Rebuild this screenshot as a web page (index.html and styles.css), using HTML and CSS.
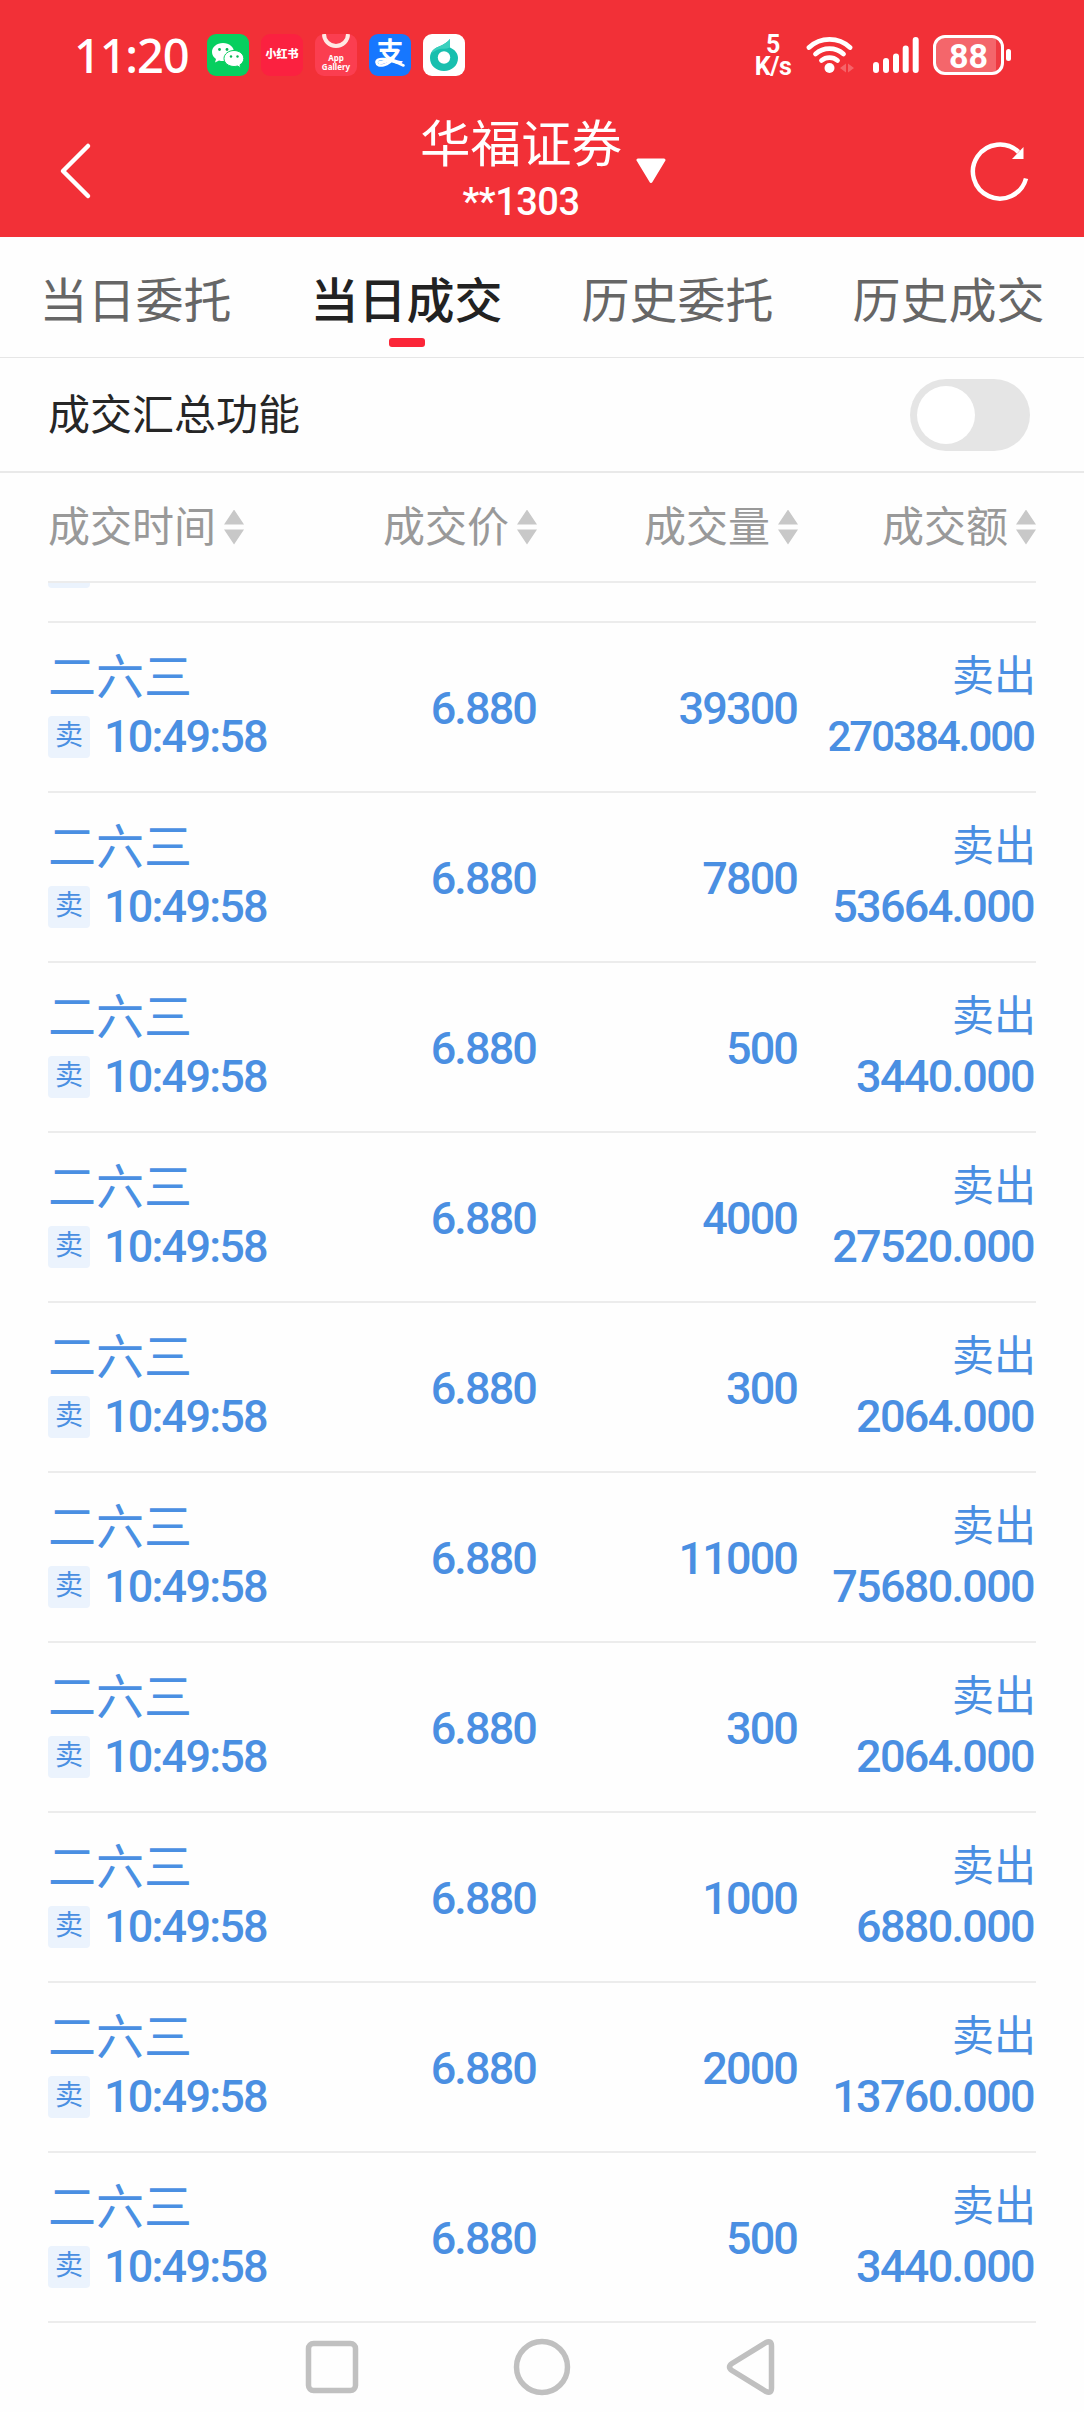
FILE: index.html
```
<!DOCTYPE html>
<html lang="zh-CN">
<head>
  <meta charset="UTF-8">
  <meta name="viewport" content="width=device-width, initial-scale=1.0">
  <title>当日成交</title>
  <link rel="stylesheet" href="styles.css">
</head>
<body>
  <header class="header">
    <div class="status-bar">
      <span class="clock">11:20</span>
      <div class="app-icons">
        <svg width="42" height="42" viewBox="0 0 42 42">
          <rect width="42" height="42" rx="9" fill="#07cf5f"/>
          <path d="M16 9c-6.300 0-11 4-11 9 0 2.800 1.500 5.300 4 7l-1 3.500 4-2c1.300.4 2.600.5 4 .5 6.300 0 11-4 11-9s-4.700-9-11-9z" fill="#fff"/>
          <path d="M27 16.500c-5.600 0-10 3.600-10 8s4.400 8 10 8c1.200 0 2.400-.2 3.500-.5l3.300 1.800-.8-3c2.400-1.500 3.800-3.700 3.800-6.300 0-4.400-4.300-8-9.800-8z" fill="#fff" stroke="#07cf5f" stroke-width="1"/>
          <g fill="#07b853"><circle cx="12.500" cy="15.500" r="1.400"/><circle cx="20" cy="15.500" r="1.400"/><circle cx="24" cy="22.500" r="1.200"/><circle cx="30.500" cy="22.500" r="1.200"/></g>
        </svg>
        <span class="app app-red">小红书</span>
        <span class="app app-gallery">
          <svg width="42" height="16" viewBox="0 0 42 16"><path d="M9 0a12 12 0 0 0 24 0" fill="none" stroke="#ffe9e4" stroke-width="4"/></svg>
          <span>App<br>Gallery</span>
        </span>
        <span class="app app-pay">支
          <svg class="pay-stroke" width="42" height="42" viewBox="0 0 42 42"><path d="M25 23C20 32 8 34 7.500 28.500C7 23 19 24 34.500 31.500" fill="none" stroke="#fff" stroke-width="2.600" stroke-linecap="round"/></svg>
        </span>
        <svg width="42" height="42" viewBox="0 0 42 42">
          <rect width="42" height="42" rx="9" fill="#fff"/>
          <path d="M27 5v8.500c5 2.200 8 6 8 10.500 0 7.500-6 13-14 13S7 31.500 7 24c0-6.500 4-9.500 9-11.500 4.500-2 8.500-4 11-7.500z" fill="#18bfae"/>
          <path d="M27 5v8.500c-4 2-8 .5-12 2-3 1-5 3-7 4 1.500-4 4.500-5.700 8-7 4.500-2 8.500-4 11-7.500z" fill="#3bd0be"/>
          <circle cx="21" cy="23.500" r="6.200" fill="#fff"/>
        </svg>
      </div>
      <div class="status-right">
        <span class="net-speed">5<br>K/s</span>
        <svg class="wifi" width="50" height="40" viewBox="0 0 50 40">
          <g fill="none" stroke="#fff" stroke-width="4.800" stroke-linecap="round">
            <path d="M3 12.500a30 30 0 0 1 41 0"/>
            <path d="M9.500 19a21 21 0 0 1 28 0"/>
            <path d="M15.500 25.500a12.500 12.500 0 0 1 16 0"/>
          </g>
          <circle cx="23.500" cy="33" r="5" fill="#fff"/>
          <path d="M40 28.500v9l-6-4.500zM42 28.500v9l6-4.500z" fill="#f56469"/>
        </svg>
        <svg class="signal" width="46" height="40" viewBox="0 0 46 40">
          <g stroke="#fff" stroke-width="6" stroke-linecap="round">
            <path d="M3 30v5M13 26v9M23 21.500v13.500M32.700 13.500v21.500M42.700 5v30"/>
          </g>
        </svg>
        <span class="battery">88</span>
        <span class="battery-tip"></span>
      </div>
    </div>
    <div class="nav-bar">
      <svg width="34" height="60" viewBox="0 0 34 60"><path d="M30 5L5 30l25 25" fill="none" stroke="#fff" stroke-width="4.500" stroke-linecap="round" stroke-linejoin="round"/></svg>
      <div class="account">
        <div class="account-text">
          <h1>华福证券</h1>
          <p>**1303</p>
        </div>
        <svg width="30" height="26" viewBox="0 0 30 26"><path d="M2 2h26L15 23.500z" fill="#fff" stroke="#fff" stroke-width="3" stroke-linejoin="round"/></svg>
      </div>
      <svg width="60" height="60" viewBox="0 0 60 60">
        <path d="M48.500 11A27 27 0 1 0 56 37.500" fill="none" stroke="#fff" stroke-width="4.500"/>
        <path d="M53.500 6v12H42z" fill="#fff"/>
      </svg>
    </div>
  </header>

  <nav class="tabs">
    <a class="tab">当日委托</a>
    <a class="tab active">当日成交</a>
    <a class="tab">历史委托</a>
    <a class="tab">历史成交</a>
  </nav>

  <div class="summary">
    <span class="summary-label">成交汇总功能</span>
    <span class="switch"></span>
  </div>

  <main class="deals">
    <div class="grid-row table-head">
      <div class="sort"><span>成交时间</span></div>
      <div class="sort"><span>成交价</span></div>
      <div class="sort"><span>成交量</span></div>
      <div class="sort"><span>成交额</span></div>
    </div>
    <div class="list" id="list"></div>
  </main>

  <footer class="system-nav">
    <svg width="60" height="60" viewBox="0 0 60 60"><rect x="6.500" y="6.500" width="47" height="47" rx="5"/></svg>
    <svg width="60" height="60" viewBox="0 0 60 60"><circle cx="30" cy="30" r="25.500"/></svg>
    <svg width="60" height="60" viewBox="0 0 60 60"><path d="M44 5.500L10 26.500Q5 30 10 33.500L44 54.500Q49.500 57 49.500 51V9Q49.500 3 44 5.500z"/></svg>
  </footer>

  <script>
    // [成交量, 成交额]
    const deals = [
      ['300', '2064.000'],
      ['39300', '270384.000'],
      ['7800', '53664.000'],
      ['500', '3440.000'],
      ['4000', '27520.000'],
      ['300', '2064.000'],
      ['11000', '75680.000'],
      ['300', '2064.000'],
      ['1000', '6880.000'],
      ['2000', '13760.000'],
      ['500', '3440.000']
    ];

    // 金额过长时缩小字号
    document.getElementById('list').innerHTML = deals.map(([volume, amount]) => `
      <div class="grid-row deal">
        <div class="stock">
          <div class="name">二六三</div>
          <div class="time"><span class="badge">卖</span>10:49:58</div>
        </div>
        <div class="num">6.880</div>
        <div class="num">${volume}</div>
        <div class="total">
          <div class="side">卖出</div>
          <div class="amount${amount.length > 9 ? ' long' : ''}">${amount}</div>
        </div>
      </div>`).join('');
  </script>
</body>
</html>
```
FILE: styles.css
```
* {
  box-sizing: border-box;
  margin: 0;
  padding: 0;
}
body {
  width: 1084px;
  height: 2412px;
  display: flex;
  flex-direction: column;
  overflow: hidden;
  background: #fefefe;
  font-family: Roboto, "Noto Sans CJK SC", sans-serif;
  color: #262626;
}
svg {
  display: block;
  flex: none;
}

/* header */
.header {
  height: 237px;
  background: #f23037;
  color: #fff;
}
.status-bar {
  height: 110px;
  padding: 0 73px 0 74px;
  display: flex;
  align-items: center;
}
.clock {
  width: 133px;
  font-family: "Noto Sans", sans-serif;
  font-size: 47px;
  font-weight: 500;
  letter-spacing: -1.200px;
}
.app-icons {
  display: flex;
  gap: 12px;
}
.app {
  position: relative;
  width: 42px;
  height: 42px;
  border-radius: 9px;
  overflow: hidden;
  text-align: center;
}
.app-red {
  background: #fb2140;
  font-size: 11px;
  font-weight: 900;
  line-height: 42px;
}
.app-gallery {
  background: #fb3e50;
  font: 700 8px/9px "Noto Sans", sans-serif;
}
.app-gallery svg {
  margin-bottom: 3px;
}
.app-pay {
  background: #1677ff;
  font-size: 27px;
  font-weight: 700;
  line-height: 38px;
}
.pay-stroke {
  position: absolute;
  left: 0;
  top: 0;
}
.status-right {
  margin-left: auto;
  display: flex;
  align-items: center;
}
.net-speed {
  width: 40px;
  margin-right: 13px;
  padding-top: 2px;
  font-size: 25px;
  font-weight: 700;
  line-height: 22px;
  letter-spacing: -0.500px;
  text-align: center;
}
.wifi {
  margin-right: 17px;
}
.signal {
  margin-right: 14px;
}
.battery {
  width: 71px;
  height: 40px;
  border: 3px solid #fff;
  border-radius: 12px;
  background: linear-gradient(to right, #f4666b 60px, #ef3a41 60px);
  font-size: 34px;
  font-weight: 700;
  line-height: 37px;
  text-align: center;
}
.battery-tip {
  width: 5px;
  height: 12px;
  margin-left: 2px;
  border-radius: 3px;
  background: #fff;
}
.nav-bar {
  height: 122px;
  padding: 0 54px 0 58px;
  display: flex;
  align-items: center;
  justify-content: space-between;
}
.account {
  display: flex;
  align-items: center;
  gap: 14px;
  margin-left: 24px;
}
.account-text {
  text-align: center;
}
.account h1 {
  padding-bottom: 6px;
  font-size: 50.500px;
  font-weight: 400;
  line-height: 56px;
}
.account p {
  font-size: 38px;
  font-weight: 500;
  line-height: 46px;
  letter-spacing: -0.500px;
}

/* tabs */
.tabs {
  height: 121px;
  display: grid;
  grid-template-columns: repeat(4, 1fr);
  border-bottom: 1px solid #e6e6e6;
}
.tab {
  display: flex;
  flex-direction: column;
  align-items: center;
  padding-top: 29px;
  font-size: 48px;
  line-height: 72px;
  color: #666;
}
.tab.active {
  color: #222;
  font-weight: 500;
}
.tab.active::after {
  content: "";
  width: 36px;
  height: 9px;
  border-radius: 3px;
  background: #fb2638;
}

/* summary switch */
.summary {
  height: 115px;
  padding: 0 54px 0 48px;
  display: flex;
  align-items: center;
  justify-content: space-between;
  border-bottom: 2px solid #e9e9e9;
  font-size: 42px;
}
.summary-label {
  padding-bottom: 7px;
}
.switch {
  width: 120px;
  height: 72px;
  padding: 7px;
  border-radius: 36px;
  background: #e5e5e5;
}
.switch::before {
  content: "";
  display: block;
  width: 58px;
  height: 58px;
  border-radius: 50%;
  background: #fff;
}

/* deals table */
.deals {
  margin: 0 48px;
}
.grid-row {
  display: grid;
  grid-template-columns: 259px 230px 261px 238px;
  align-items: center;
}
.table-head {
  height: 110px;
  border-bottom: 2px solid #ececec;
  font-size: 42px;
  color: #999;
}
.sort {
  display: flex;
  align-items: center;
  justify-content: flex-end;
  gap: 8px;
}
.sort:first-child {
  justify-content: flex-start;
}
.sort span {
  padding-bottom: 7px;
}
.sort::after {
  content: "";
  width: 20px;
  height: 35px;
  background: #c8c8c8;
  clip-path: polygon(50% 0, 100% 15px, 0 15px, 0 20px, 100% 20px, 50% 100%, 0 20px, 0 15px);
}
.list {
  height: 1740px;
  display: flex;
  flex-direction: column;
  justify-content: flex-end;
  overflow: hidden;
}
.deal {
  flex: none;
  height: 170px;
  border-bottom: 2px solid #ececec;
  color: #4a8fe2;
}
.stock {
  padding-bottom: 10px;
}
.name {
  font-size: 48px;
  line-height: 68px;
}
.time {
  display: flex;
  align-items: center;
  gap: 14px;
  height: 48px;
  font-size: 45px;
  font-weight: 500;
  letter-spacing: -1.800px;
}
.badge {
  width: 42px;
  height: 42px;
  margin-top: 1px;
  border-radius: 4px;
  background: #ebf3fd;
  font-size: 28px;
  font-weight: 400;
  line-height: 40px;
  letter-spacing: 0;
  text-align: center;
}
.num {
  padding: 2px 1px 0 0;
  font-size: 45px;
  font-weight: 500;
  letter-spacing: -1.900px;
  text-align: right;
}
.total {
  padding-bottom: 4px;
  text-align: right;
}
.side {
  font-size: 42px;
  line-height: 64px;
}
.amount {
  padding-right: 2px;
  font-size: 45px;
  font-weight: 500;
  letter-spacing: -1.700px;
  line-height: 56px;
}
.amount.long {
  font-size: 42px;
  letter-spacing: -2px;
}

/* system navigation */
.system-nav {
  flex: 1;
  padding: 0 302px 2px;
  display: flex;
  align-items: center;
  justify-content: space-between;
}
.system-nav svg {
  fill: none;
  stroke: #c0c0c0;
  stroke-width: 5.500;
}
```
